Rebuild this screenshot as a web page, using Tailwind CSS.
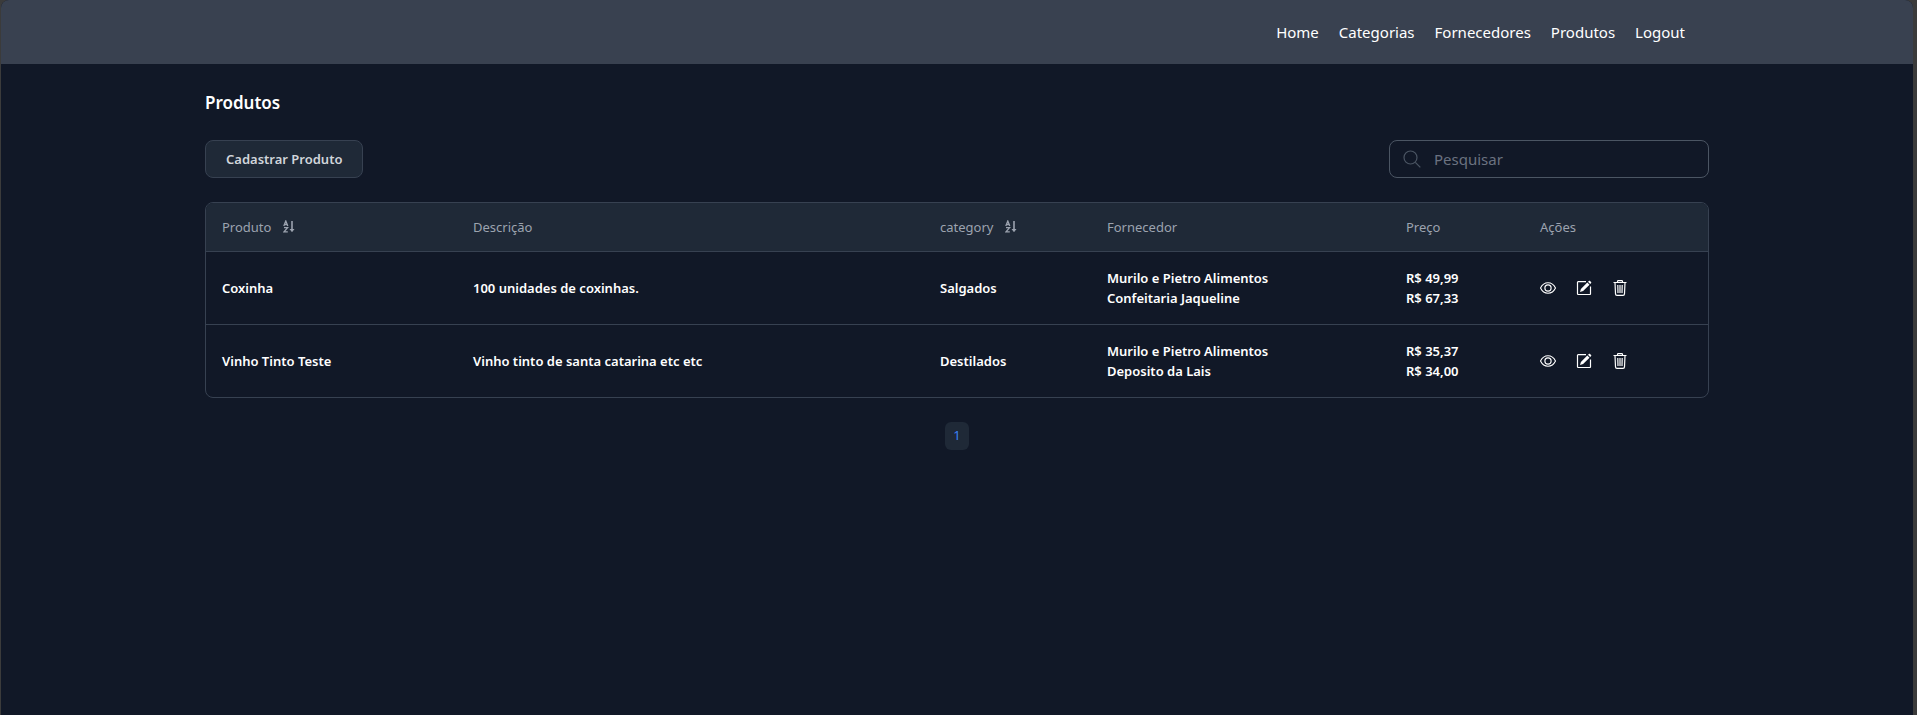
<!DOCTYPE html>
<html lang="pt-BR">
<head>
<meta charset="utf-8">
<title>Produtos</title>
<script src="https://cdn.jsdelivr.net/npm/@tailwindcss/browser@4"></script>
</head>
<body class="bg-[#3b3b3b] pl-px pr-1 font-['Segoe_UI','Noto_Sans',sans-serif] text-[15px] text-white">
<svg class="hidden">
  <symbol id="sort" viewBox="0 0 12 13">
    <path d="M.8 6 2.800 1 4.800 6M1.500 4.500h2.600M1 7.600h3.600L1 11.900h3.800" fill="none" stroke="currentColor" stroke-width="1.300"/>
    <path d="M8.200 1h1.600v8h1.700L9 12.200 6.500 9h1.700Z" fill="currentColor"/>
  </symbol>
  <symbol id="eye" viewBox="0 0 16 16">
    <path d="M.5 8C2.200 4.600 5 2.800 8 2.800S13.800 4.600 15.500 8C13.800 11.400 11 13.200 8 13.200S2.200 11.400.5 8Z" fill="none" stroke="currentColor" stroke-width="1.100"/>
    <circle cx="8" cy="8" r="3.100" fill="none" stroke="currentColor" stroke-width="1.200"/>
  </symbol>
  <symbol id="edit" viewBox="0 0 16 16">
    <path d="M10 1.600H2.200a.7.7 0 0 0-.7.7v11.500c0 .4.300.7.7.7h11.600a.7.7 0 0 0 .7-.7V6.500" fill="none" stroke="currentColor" stroke-width="1.200"/>
    <path d="M4 12l.9-3.100L11.300 2.500l2.200 2.200-6.400 6.400ZM12 1.800l.9-.9c.3-.3.8-.3 1.100 0l1.100 1.100c.3.300.3.800 0 1.100l-.9.900Z" fill="currentColor"/>
  </symbol>
  <symbol id="trash" viewBox="0 0 16 16">
    <path d="M1.500 2.500h13M5.500 2.300V1.400c0-.5.3-.8.8-.8h3.400c.5 0 .8.300.8.800v.9M3 2.500l.5 11.300c0 .9.600 1.600 1.500 1.600h6c.9 0 1.500-.7 1.500-1.600L13 2.500M5.800 5l.2 8M8 5v8M10.200 5l-.2 8" fill="none" stroke="currentColor" stroke-width="1.200"/>
  </symbol>
</svg>
<div class="min-h-screen overflow-hidden rounded-t-lg bg-[#111827]">
  <header class="bg-[#394150]">
    <nav class="mx-auto flex h-16 max-w-[1536px] items-center justify-end gap-5 px-10">
      <a href="#">Home</a>
      <a href="#">Categorias</a>
      <a href="#">Fornecedores</a>
      <a href="#">Produtos</a>
      <a href="#">Logout</a>
    </nav>
  </header>
  <main class="mx-auto max-w-[1536px] px-4 pt-6">
    <h1 class="text-[17px] leading-[30px] font-semibold">Produtos</h1>
    <div class="mt-[22px] flex items-center justify-between">
      <button class="h-[38px] rounded-lg border border-[#374151] bg-[#1f2937] px-5 text-[13px] leading-5 font-semibold text-[#d1d5db]">Cadastrar Produto</button>
      <label class="flex h-[38px] w-80 items-center gap-3 rounded-lg border border-[#4b5563] px-3">
        <svg class="size-5 shrink-0 text-[#4b5563]" viewBox="0 0 20 20" fill="none" stroke="currentColor" stroke-width="1.200"><circle cx="8.500" cy="8.500" r="6.500"/><path d="M13.300 13.300l5 5"/></svg>
        <input type="search" aria-label="Pesquisar" placeholder="Pesquisar" class="min-w-0 flex-1 bg-transparent outline-none placeholder:text-[#6b7280]">
      </label>
    </div>
    <div class="mt-6 overflow-hidden rounded-lg border border-[#374151]">
      <table class="w-full table-fixed text-left text-[13px] leading-5">
        <colgroup><col class="w-[251px]"><col class="w-[467px]"><col class="w-[167px]"><col class="w-[299px]"><col class="w-[134px]"><col></colgroup>
        <thead class="bg-[#1f2937] text-[#9ca3af]">
          <tr class="h-12 border-b border-[#374151]">
            <th class="px-4 font-normal"><button class="flex items-center gap-3">Produto <svg class="h-[13px] w-3"><use href="#sort"/></svg></button></th>
            <th class="px-4 font-normal">Descrição</th>
            <th class="px-4 font-normal"><button class="flex items-center gap-3">category <svg class="h-[13px] w-3"><use href="#sort"/></svg></button></th>
            <th class="px-4 font-normal">Fornecedor</th>
            <th class="px-4 font-normal">Preço</th>
            <th class="px-4 font-normal">Ações</th>
          </tr>
        </thead>
        <tbody class="font-semibold">
          <tr class="h-[73px] border-b border-[#374151]">
            <td class="px-4">Coxinha</td>
            <td class="px-4">100 unidades de coxinhas.</td>
            <td class="px-4">Salgados</td>
            <td class="px-4"><p>Murilo e Pietro Alimentos</p><p>Confeitaria Jaqueline</p></td>
            <td class="px-4"><p>R$ 49,99</p><p>R$ 67,33</p></td>
            <td class="px-4"><div class="flex items-center gap-5"><button aria-label="Ver"><svg class="size-4"><use href="#eye"/></svg></button><button aria-label="Editar"><svg class="size-4"><use href="#edit"/></svg></button><button aria-label="Excluir"><svg class="size-4"><use href="#trash"/></svg></button></div></td>
          </tr>
          <tr class="h-[73px]">
            <td class="px-4">Vinho Tinto Teste</td>
            <td class="px-4">Vinho tinto de santa catarina etc etc</td>
            <td class="px-4">Destilados</td>
            <td class="px-4"><p>Murilo e Pietro Alimentos</p><p>Deposito da Lais</p></td>
            <td class="px-4"><p>R$ 35,37</p><p>R$ 34,00</p></td>
            <td class="px-4"><div class="flex items-center gap-5"><button aria-label="Ver"><svg class="size-4"><use href="#eye"/></svg></button><button aria-label="Editar"><svg class="size-4"><use href="#edit"/></svg></button><button aria-label="Excluir"><svg class="size-4"><use href="#trash"/></svg></button></div></td>
          </tr>
        </tbody>
      </table>
    </div>
    <div class="mt-6 flex justify-center">
      <button class="h-7 w-6 rounded-md bg-[#1f2937] text-[13px] text-[#3b82f6]">1</button>
    </div>
  </main>
</div>
</body>
</html>
